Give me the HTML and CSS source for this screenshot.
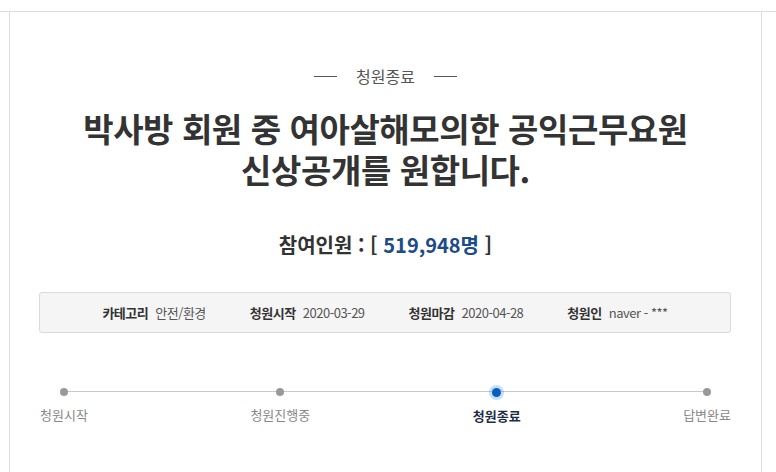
FILE: index.html
```html
<!DOCTYPE html>
<html lang="ko">

<head>
    <meta charset="utf-8">
    <meta name="viewport" content="width=device-width, initial-scale=1.0">
    <title>청원종료</title>
    <link rel="stylesheet" href="styles.css">
</head>

<body>
    <div class="page">
        <section class="petition">
            <p class="status"><span>청원종료</span></p>
            <h1>박사방 회원 중 여아살해모의한 공익근무요원<br>신상공개를 원합니다.</h1>
            <h2 class="count">참여인원 : [ <span>519,948명</span> ]</h2>

            <ul class="meta">
                <li><b>카테고리</b> 안전/환경</li>
                <li><b>청원시작</b> 2020-03-29</li>
                <li><b>청원마감</b> 2020-04-28</li>
                <li><b>청원인</b> naver - ***</li>
            </ul>

            <ol class="steps">
                <li>청원시작</li>
                <li>청원진행중</li>
                <li class="now">청원종료</li>
                <li>답변완료</li>
            </ol>
        </section>
    </div>
</body>

</html>
```

FILE: styles.css
```css
* {
    margin: 0;
    padding: 0;
    box-sizing: border-box;
}

body {
    font-family: "Noto Sans CJK KR", "Noto Sans", sans-serif;
    color: #333;
    background: #fff;
}

.page {
    margin-top: 11px;
    border-top: 1px solid #dcdcdc;
    padding-left: 9px;
}

.petition {
    width: 753px;
    height: 470px;
    border-left: 1px solid #dcdcdc;
    border-right: 1px solid #dcdcdc;
    padding-top: 52px;
    text-align: center;
}

/* 상태 라벨 */
.status {
    font-size: 16px;
    color: #555;
    display: flex;
    justify-content: center;
    align-items: center;
    gap: 19px;
    line-height: 24px;
}

.status::before,
.status::after {
    content: "";
    width: 23px;
    height: 1px;
    background: #555;
}

h1 {
    margin-top: 20px;
    font-size: 33px;
    line-height: 41px;
    font-weight: 700;
    color: #333;
    letter-spacing: -0.4px;
}

.count {
    margin-top: 41px;
    font-size: 20px;
    line-height: 28px;
    font-weight: 700;
    color: #333;
}

.count span {
    color: #1d4a8a;
}

/* 청원 정보 */
.meta {
    list-style: none;
    margin: 33px 30px 0 29px;
    height: 41px;
    background: #f5f5f5;
    border: 1px solid #dadada;
    border-radius: 3px;
    display: flex;
    justify-content: center;
    align-items: center;
    gap: 44px;
    font-size: 13px;
    color: #555;
    letter-spacing: -0.5px;
}

.meta b {
    color: #333;
    margin-right: 4px;
}

/* 진행 단계 */
.steps {
    list-style: none;
    position: relative;
    margin: 52px 30px 0 30px;
    display: flex;
    justify-content: space-between;
    font-size: 13px;
    color: #888;
}

.steps::before {
    content: "";
    position: absolute;
    left: 22px;
    right: 24px;
    top: 6px;
    height: 1px;
    background: #c8c8c8;
}

.steps li {
    position: relative;
    display: flex;
    flex-direction: column;
    align-items: center;
    gap: 9px;
}

.steps li::before {
    content: "";
    width: 8px;
    height: 8px;
    border-radius: 50%;
    background: #999;
    margin-top: 3px;
}

.steps .now {
    color: #1f2d45;
    font-weight: 700;
}

.steps .now::before {
    background: #0b5cbf;
    box-shadow: 0 0 0 3px rgba(60, 150, 240, 0.3);
    width: 9px;
    height: 9px;
}
```
